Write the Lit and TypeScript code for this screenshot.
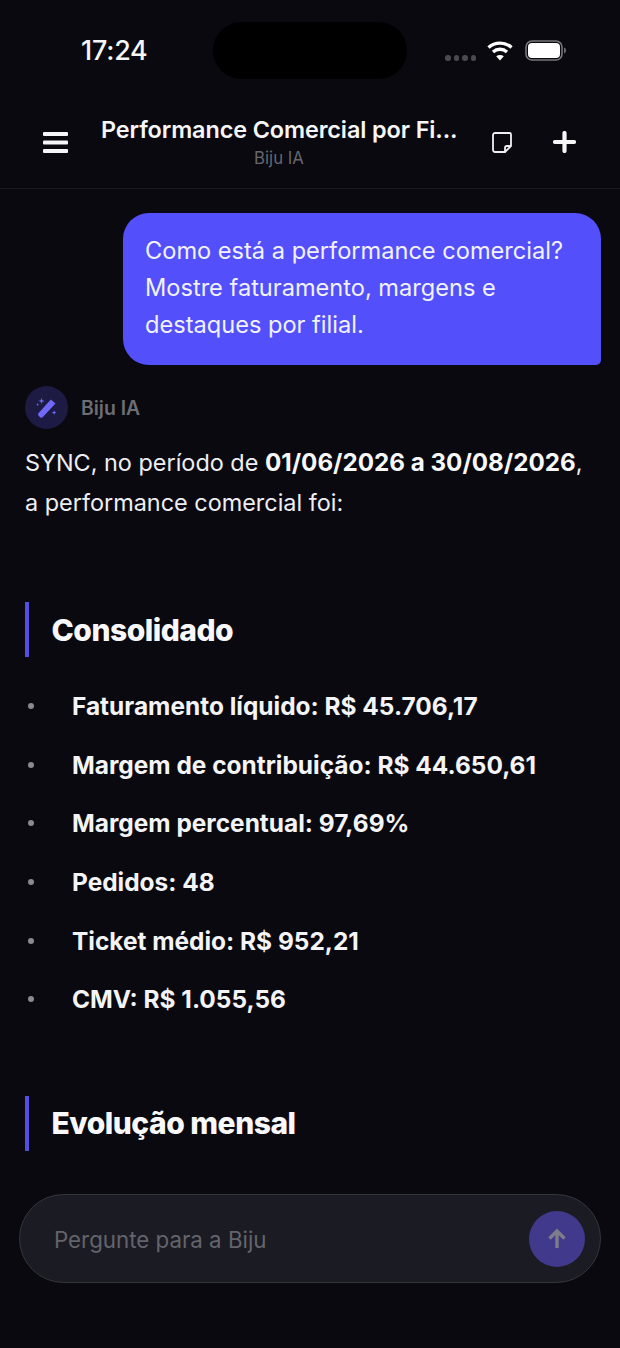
import { LitElement, html, css } from "lit";
import { customElement } from "lit/decorators.js";

const items = [
  "Faturamento líquido: R$ 45.706,17",
  "Margem de contribuição: R$ 44.650,61",
  "Margem percentual: 97,69%",
  "Pedidos: 48",
  "Ticket médio: R$ 952,21",
  "CMV: R$ 1.055,56",
];

@customElement("app-root")
export class AppRoot extends LitElement {
  static styles = css`
    :host { display: block; font-family: Inter, "Noto Sans", sans-serif; color: #fff; }
    * { box-sizing: border-box; }
    .page { height: 1348px; background: #09090f; display: flex; flex-direction: column; overflow: hidden; position: relative; }
    .status { height: 100px; flex: none; display: grid; grid-template-columns: 213px 194px 1fr; padding-top: 22px; }
    .time { font-size: 26.9px; font-weight: 500; padding: 12px 0 0 81px; line-height: 32px; letter-spacing: -0.2px; color: #f6f6f8; }
    .island { height: 57px; background: #000; border-radius: 29px; }
    .sys { display: flex; align-items: flex-start; padding: 18px 0 0 38px; }
    .dots { display: flex; gap: 3px; margin: 15px 11px 0 0; }
    .dots i { width: 5.500px; height: 5.500px; border-radius: 50%; background: #4a4a50; }
    .wifi { margin-right: 12px; }
    .header { height: 89px; flex: none; border-bottom: 1px solid #1a1a22; display: grid; grid-template-columns: 101px 356px 1fr; }
    .menu { padding: 31px 0 0 43px; }
    .titles { text-align: center; padding-top: 15px; }
    .title { font-size: 23.4px; line-height: 30px; font-weight: 600; color: #f6f6f8; white-space: nowrap; letter-spacing: -0.1px; }
    .sub { font-size: 16.8px; line-height: 20px; color: #66666e; margin-top: 3px; }
    .actions { display: flex; padding: 31px 0 0 34px; gap: 40px; }
    .chat { flex: 1; min-height: 0; padding: 24px 19px 0 25px; }
    .bubble-row { display: flex; justify-content: flex-end; }
    .bubble { width: 478px; height: 152px; background: #5350fb; border-radius: 26px 26px 5px 26px; padding: 19px 22px; font-size: 23.6px; line-height: 37px; color: #f2f2fe; }
    .who { display: flex; align-items: center; gap: 13px; margin-top: 21px; height: 43px; }
    .avatar { width: 43px; height: 43px; border-radius: 50%; background: #1d1b44; display: flex; align-items: center; justify-content: center; }
    .name { font-size: 19.4px; font-weight: 600; color: #6d6d74; }
    .intro { margin: 14px 0 0; font-size: 23.43px; line-height: 40px; color: #eeeef2; }
    .intro b { font-weight: 700; font-size: 24.2px; color: #f8f8fa; }
    h2 { margin: 0; border-left: 4px solid #5350e0; height: 55px; padding-left: 22.500px; display: flex; align-items: center; font-size: 30px; font-weight: 800; letter-spacing: -0.5px; color: #f8f8fa; }
    h2.first { margin-top: 79px; }
    h2.second { margin-top: 67px; }
    ul { list-style: none; margin: 20px 0 0; padding: 0; display: flex; flex-direction: column; }
    li { height: 58.6px; display: flex; align-items: center; font-size: 24.450px; font-weight: 700; color: #f4f4f6; }
    li::before { content: ""; width: 6px; height: 6px; border-radius: 50%; background: #8a8a90; margin: 0 38px 0 3px; flex: none; }
    .composer { position: absolute; left: 19px; top: 1194px; width: 582px; height: 89px; border: 1.5px solid #35353c; border-radius: 45px; background: #1b1b23; display: flex; align-items: center; justify-content: space-between; padding: 0 15.500px 0 34px; }
    .ph { font-size: 22.3px; color: #64646c; padding-top: 2px; }
    .send { width: 56px; height: 56px; border-radius: 50%; background: #413a8c; display: flex; align-items: center; justify-content: center; }
  `;

  render() {
    return html`<div class="page">
      <div class="status">
        <div class="time">17:24</div>
        <div class="island"></div>
        <div class="sys">
          <div class="dots"><i></i><i></i><i></i><i></i></div>
          <svg class="wifi" width="26" height="21" viewBox="0 0 26 21" fill="none" stroke="#fff" stroke-width="3.400">
            <path d="M1.500 7.500C7.800 1.700 18.200 1.700 24.500 7.500"/>
            <path d="M6 12c4-3.600 10-3.600 14 0"/>
            <path d="M13 20.500l-3.800-4.200c2.200-1.600 5.400-1.600 7.600 0z" fill="#fff" stroke="none"/>
          </svg>
          <svg width="42" height="21" viewBox="0 0 42 21">
            <rect x="1" y="1" width="36" height="19" rx="6" fill="none" stroke="#77777c" stroke-width="1.600"/>
            <rect x="3" y="3" width="32" height="15" rx="4" fill="#fff"/>
            <path d="M39 7.500c1.400.4 2 1.600 2 3s-.6 2.600-2 3z" fill="#6a6a70"/>
          </svg>
        </div>
      </div>
      <div class="header">
        <div class="menu">
          <svg width="25" height="23" viewBox="0 0 25 23" fill="#f6f6f8">
            <rect x="0" y="1" width="25" height="4" rx="1"/>
            <rect x="0" y="9.500" width="25" height="4" rx="1"/>
            <rect x="0" y="18" width="25" height="4" rx="1"/>
          </svg>
        </div>
        <div class="titles">
          <div class="title">Performance Comercial por Fi...</div>
          <div class="sub">Biju IA</div>
        </div>
        <div class="actions">
          <svg width="22" height="22" viewBox="0 0 22 22" fill="none" stroke="#f0f0f4" stroke-width="1.800" stroke-linejoin="round">
            <path d="M4 2h14.500a1.500 1.500 0 0 1 1.500 1.500V15l-6 6H4a2 2 0 0 1-2-2V4a2 2 0 0 1 2-2z"/>
            <path d="M20 15h-4a2 2 0 0 0-2 2v4"/>
          </svg>
          <svg width="23" height="22" viewBox="0 0 23 22" stroke="#f6f6f8" stroke-width="4.200" stroke-linecap="round">
            <path d="M11.500 2v18M2 11h19"/>
          </svg>
        </div>
      </div>
      <div class="chat">
        <div class="bubble-row">
          <div class="bubble">Como está a performance comercial? Mostre faturamento, margens e destaques por filial.</div>
        </div>
        <div class="who">
          <div class="avatar">
            <svg width="22" height="22" viewBox="0 0 20 20" fill="#7068f8">
              <path d="M13.500 2.300l4.200 3.700L6.300 18.200a1.800 1.800 0 0 1-2.600.1l-1.300-1.200a1.800 1.800 0 0 1 0-2.600z"/>
              <path d="M5 1l.7 2 2 .7-2 .7L5 6.400l-.7-2-2-.7 2-.7zM1.500 5.500l.4 1 1 .4-1 .4-.4 1-.4-1-1-.4 1-.4zM16.500 12l.6 1.600 1.600.6-1.600.6-.6 1.600-.6-1.600-1.600-.6 1.600-.6z"/>
            </svg>
          </div>
          <div class="name">Biju IA</div>
        </div>
        <p class="intro">SYNC, no período de <b>01/06/2026 a 30/08/2026</b>, a performance comercial foi:</p>
        <h2 class="first">Consolidado</h2>
        <ul>${items.map((t) => html`<li>${t}</li>`)}</ul>
        <h2 class="second">Evolução mensal</h2>
      </div>
      <div class="composer">
        <span class="ph">Pergunte para a Biju</span>
        <div class="send">
          <svg width="22" height="22" viewBox="0 0 22 22" fill="none" stroke="#7c7c8a" stroke-width="3.400">
            <path d="M11 20V3M3.500 10.500L11 3l7.500 7.500"/>
          </svg>
        </div>
      </div>
    </div>`;
  }
}
